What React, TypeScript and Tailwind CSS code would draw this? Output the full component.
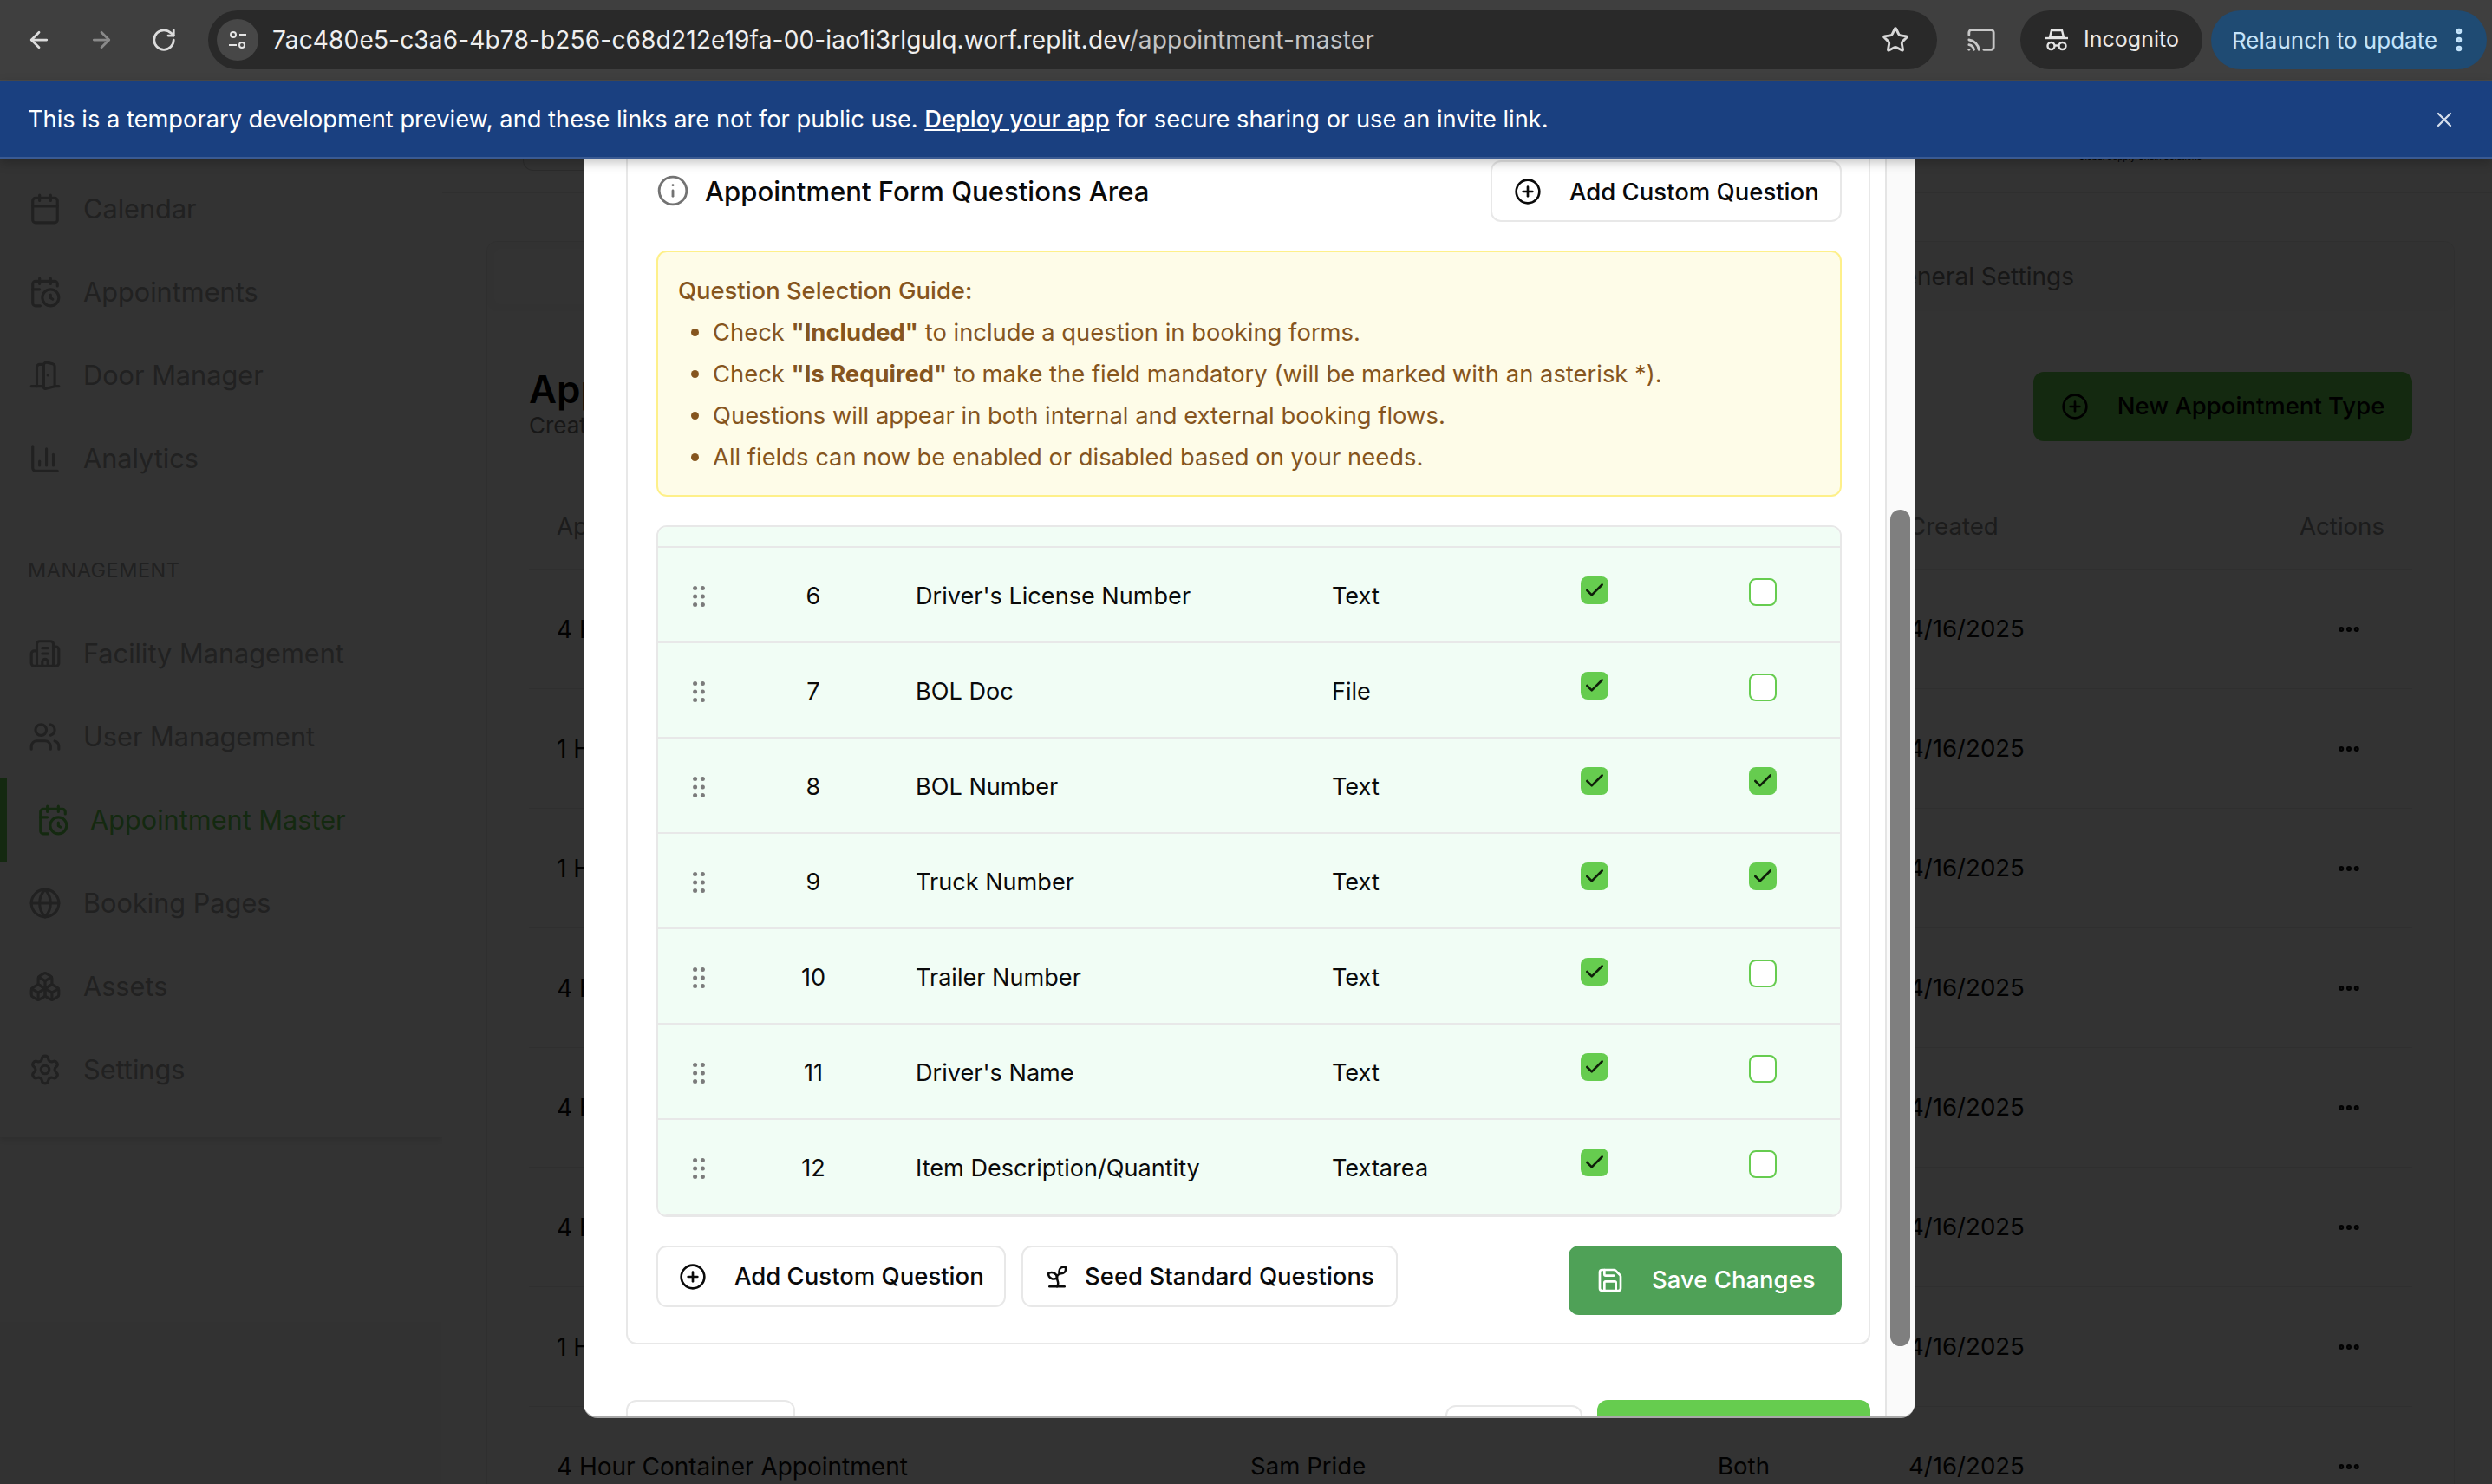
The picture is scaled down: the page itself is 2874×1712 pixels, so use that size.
import React from "react";
import {
  ArrowLeft, ArrowRight, RotateCw, Star, Cast, EllipsisVertical, X, Info, CirclePlus, Sprout, Save,
  Check, Calendar, CalendarClock, DoorOpen, ChartColumn, Building2, Users, Globe, Boxes, Settings, Ellipsis,
} from "lucide-react";

function SiteIcon() {
  return (
    <svg width="26" height="26" viewBox="0 0 26 26" fill="none" stroke="#e4e4e4" strokeWidth="2">
      <circle cx="8" cy="7" r="3" />
      <path d="M15 7h8" />
      <circle cx="18" cy="19" r="3" />
      <path d="M3 19h9" />
    </svg>
  );
}

function IncognitoIcon() {
  return (
    <svg width="30" height="30" viewBox="0 0 30 30" fill="none" stroke="#e4e4e4" strokeWidth="2.4">
      <path d="M9 4h12l2 8H7z" fill="none" />
      <path d="M2 13h26" />
      <circle cx="8.5" cy="22" r="4" />
      <circle cx="21.5" cy="22" r="4" />
      <path d="M12.5 21.5h5" />
    </svg>
  );
}

function GripDots() {
  return (
    <svg width="14" height="24" viewBox="0 0 14 24" fill="#7b7b7b" className="mt-[4px]">
      <circle cx="2.6" cy="2.6" r="2.5" /><circle cx="11.4" cy="2.6" r="2.5" />
      <circle cx="2.6" cy="12" r="2.5" /><circle cx="11.4" cy="12" r="2.5" />
      <circle cx="2.6" cy="21.4" r="2.5" /><circle cx="11.4" cy="21.4" r="2.5" />
    </svg>
  );
}

function ChromeBar() {
  return (
    <div className="flex h-[94px] items-center border-b-2 border-[#4a4a4a] bg-[#3f3f3f] text-[26px] text-[#e8e8e8]">
      <div className="flex w-[240px] shrink-0 items-center pl-[30px] text-[#dcdcdc]">
        <ArrowLeft size={30} strokeWidth={2.2} />
        <ArrowRight size={30} strokeWidth={2.2} className="ml-[42px] text-[#8a8a8a]" />
        <RotateCw size={30} strokeWidth={2.2} className="ml-[42px]" />
      </div>
      <div className="flex h-[68px] w-[1994px] shrink-0 items-center rounded-full bg-[#292929] pl-[10px] pr-[32px]">
        <div className="flex h-[48px] w-[48px] items-center justify-center rounded-full bg-[#474747]">
          <SiteIcon />
        </div>
        <div className="ml-[16px] flex-1 text-[28.1px] tracking-[0.12px]">
          <span className="text-[#efefef]">7ac480e5-c3a6-4b78-b256-c68d212e19fa-00-iao1i3rlgulq.worf.replit.dev</span>
          <span className="text-[#c4c4c4]">/appointment-master</span>
        </div>
        <Star size={32} strokeWidth={2.2} className="text-[#d8d8d8]" />
      </div>
      <Cast size={34} strokeWidth={2} className="ml-[34px] text-[#c8c8c8]" />
      <div className="ml-[28px] flex h-[68px] w-[210px] items-center justify-center gap-[16px] rounded-full bg-[#292929] text-[25px]">
        <IncognitoIcon />
        <span>Incognito</span>
      </div>
      <div className="ml-[10px] flex h-[68px] w-[318px] items-center rounded-full bg-[#1f4b73] pl-[24px] text-[26px] text-[#c4e4fb]">
        <span>Relaunch to update</span>
        <EllipsisVertical size={34} strokeWidth={2.6} className="ml-[8px]" />
      </div>
    </div>
  );
}

function Banner() {
  return (
    <div className="relative z-20 flex h-[89px] items-center border-b-2 border-[#3a5a92] bg-[#1a4080] pl-[32px] pr-[41px] text-[27.25px] text-white shadow-[0_4px_12px_rgba(0,0,0,0.25)]">
      <span className="pt-[2px]">
        This is a temporary development preview, and these links are not for public use.{" "}
        <span className="font-medium underline">Deploy your app</span> for secure sharing or use an invite link.
      </span>
      <X size={28} strokeWidth={2} className="ml-auto text-[#d5deec]" />
    </div>
  );
}

const navTop = [
  { label: "Calendar", Icon: Calendar },
  { label: "Appointments", Icon: CalendarClock },
  { label: "Door Manager", Icon: DoorOpen },
  { label: "Analytics", Icon: ChartColumn },
];
const navBottom = [
  { label: "Facility Management", Icon: Building2 },
  { label: "User Management", Icon: Users },
  { label: "Appointment Master", Icon: CalendarClock, active: true },
  { label: "Booking Pages", Icon: Globe },
  { label: "Assets", Icon: Boxes },
  { label: "Settings", Icon: Settings },
];

function NavRow({ label, Icon, active }: { label: string; Icon: any; active?: boolean }) {
  return active ? (
    <div className="flex h-[96px] items-center gap-[24px] border-l-[8px] border-[#66cc4f] pl-[34px] text-[#66cc4f]">
      <Icon size={38} strokeWidth={2} />
      <span className="text-[30.7px]">{label}</span>
    </div>
  ) : (
    <div className="flex h-[96px] items-center gap-[25px] pl-[33px] text-[#a3a3a3]">
      <Icon size={38} strokeWidth={2} />
      <span className="text-[30.7px]">{label}</span>
    </div>
  );
}

function Sidebar() {
  return (
    <div className="h-[1129px] w-[510px] shrink-0 bg-white pb-[32px] pt-[10px] shadow-[0_3px_6px_rgba(0,0,0,0.1)]">
      {navTop.map((n) => <NavRow key={n.label} {...n} />)}
      <div className="h-[129px] pl-[32px] pt-[65px] text-[23.5px] leading-[32px] tracking-[0.5px] text-[#a3a3a3]">MANAGEMENT</div>
      {navBottom.map((n) => <NavRow key={n.label} {...n} />)}
    </div>
  );
}

const bgRows = [
  "4 Hour Trailer Appointment",
  "1 Hour Trailer Appointment",
  "1 Hour Container Appointment",
  "4 Hour Trailer Appointment",
  "4 Hour Trailer Appointment",
  "4 Hour Trailer Appointment",
  "1 Hour Trailer Appointment",
  "4 Hour Container Appointment",
];

const bgCols = "grid grid-cols-[800px_539px_220px_1fr_120px] items-center pl-[32px] pr-[32px]";

function MainBackground() {
  return (
    <div className="min-w-0 flex-1 bg-[#fcfcfc]">
      <div className="flex h-[40px] items-start border-b border-[#ececec] pl-[93px]">
        <div className="h-[14px] w-[80px] rounded-b-xl border-x border-b border-[#d4d4d4]" />
        <div className="ml-auto mr-[335px] -mt-[9px] text-[10px] leading-[14px] text-black">Global Supply Chain Solutions</div>
      </div>
      <div className="ml-[51px] mr-[43px] mt-[55px] rounded-xl border border-[#ececec] pb-[40px]">
        <div className="flex h-[80px] items-center rounded-xl bg-[#f7f7f7] p-[8px]">
          <div className="h-[64px] w-[500px] rounded-lg bg-white" />
          <span className="ml-auto mr-[430px] text-[28px] text-[#737373]">General Settings</span>
        </div>
        <div className="px-[48px]">
          <div className="mt-[70px] flex h-[80px] items-center justify-between">
            <div className="-mt-[4px]">
              <div className="text-[44px] font-semibold leading-[44px] text-black">Appointment Types</div>
              <div className="mt-[4px] text-[26px] leading-[32px] text-[#737373]">Create and manage appointment types</div>
            </div>
            <div className="flex h-[80px] w-[437px] items-center justify-center gap-[33px] rounded-xl bg-[#66cc4f] text-[27.5px] font-medium text-black">
              <CirclePlus size={32} strokeWidth={2} />
              <span>New Appointment Type</span>
            </div>
          </div>
          <div className={`${bgCols} mt-[48px] h-[100px] border-b border-[#ececec] pt-[2px] text-[27.6px] text-[#8a8a8a]`}>
            <span>Appointment Type</span>
            <span>Created By</span>
            <span>Mode</span>
            <span>Created</span>
            <span className="justify-self-end">Actions</span>
          </div>
          {bgRows.map((r, i) => (
            <div key={i} className={`${bgCols} h-[138px] border-b border-[#ececec] text-[27.6px] text-[#0a0a0a]`}>
              <span className="text-[28px]">{r}</span>
              <span>Sam Pride</span>
              <span>Both</span>
              <span>4/16/2025</span>
              <Ellipsis size={30} strokeWidth={2.8} className="mr-[26px] justify-self-end" />
            </div>
          ))}
        </div>
      </div>
    </div>
  );
}

const qRows = [
  { n: 6, name: "Driver's License Number", type: "Text", req: false },
  { n: 7, name: "BOL Doc", type: "File", req: false },
  { n: 8, name: "BOL Number", type: "Text", req: true },
  { n: 9, name: "Truck Number", type: "Text", req: true },
  { n: 10, name: "Trailer Number", type: "Text", req: false },
  { n: 11, name: "Driver's Name", type: "Text", req: false },
  { n: 12, name: "Item Description/Quantity", type: "Textarea", req: false },
];

function Box({ on, className }: { on: boolean; className?: string }) {
  return on ? (
    <div className={`flex h-[32px] w-[32px] items-center justify-center rounded-[8px] bg-[#66cc4f] text-[#0f1f0a] ${className ?? ""}`}>
      <Check size={26} strokeWidth={2.4} />
    </div>
  ) : (
    <div className={`h-[32px] w-[32px] rounded-[8px] border-2 border-[#66cc4f] bg-white ${className ?? ""}`} />
  );
}

function QuestionRow({ n, name, type, req }: { n: number; name: string; type: string; req: boolean }) {
  return (
    <div className="grid h-[110px] grid-cols-[79px_120px_538px_287px_194px_1fr] items-center border-b-2 border-[#e8e8e8] bg-[#f1fdf5] pl-[40px] text-[27.1px] text-[#0a0a0a]">
      <GripDots />
      <span className="pt-[4px] text-center">{n}</span>
      <span className="whitespace-nowrap pl-[58px] pt-[4px]">{name}</span>
      <span className="pt-[4px]">{type}</span>
      <Box on className="-mt-[10px]" />
      <Box on={req} className={req ? "-mt-[10px]" : "-mt-[6px]"} />
    </div>
  );
}

function OutlineBtn({ className, children }: { className?: string; children: React.ReactNode }) {
  return (
    <div className={`flex h-[71px] items-center rounded-xl border-2 border-[#e8e8e8] bg-white text-[27.5px] font-medium text-[#0a0a0a] ${className ?? ""}`}>
      {children}
    </div>
  );
}

function Modal() {
  return (
    <div className="absolute left-[673px] top-0 z-10 flex h-[1453px] w-[1535px] overflow-hidden rounded-b-2xl border-b-2 border-[#a8a8a8] bg-white">
      <div className="h-full min-w-0 flex-1 pl-[49px] pr-[17px]">
        <div className="rounded-b-xl border-x-2 border-b-2 border-[#e8e8e8] pb-[32px] pl-[33px] pr-[31px] pt-[2px]">
          <div className="flex h-[71px] items-center justify-between">
            <div className="flex items-center gap-[18px]">
              <Info size={38} strokeWidth={1.8} className="text-[#737373]" />
              <span className="pt-[2px] text-[31.1px] font-medium text-[#0a0a0a]">Appointment Form Questions Area</span>
            </div>
            <OutlineBtn className="w-[405px] pl-[25px]">
              <CirclePlus size={32} strokeWidth={2} />
              <span className="ml-[32px] pt-[2px]">Add Custom Question</span>
            </OutlineBtn>
          </div>
          <div className="mt-[33px] h-[284px] rounded-xl border-2 border-[#fef08a] bg-[#fefce8] pl-[23px] pt-[20px] text-[27.4px] leading-[48px] text-[#85551e]">
            <div className="font-medium">Question Selection Guide:</div>
            <ul className="list-disc pl-[40px]">
              <li>Check <b>"Included"</b> to include a question in booking forms.</li>
              <li>Check <b>"Is Required"</b> to make the field mandatory (will be marked with an asterisk *).</li>
              <li>Questions will appear in both internal and external booking flows.</li>
              <li>All fields can now be enabled or disabled based on your needs.</li>
            </ul>
          </div>
          <div className="mt-[33px] overflow-hidden rounded-xl border-2 border-[#e8e8e8]">
            <div className="h-[24px] border-b-2 border-[#e8e8e8] bg-[#f1fdf5]" />
            {qRows.map((r) => <QuestionRow key={r.n} {...r} />)}
          </div>
          <div className="mt-[33px] flex items-start">
            <OutlineBtn className="w-[403px] pl-[24px]">
              <CirclePlus size={32} strokeWidth={2} />
              <span className="ml-[32px]">Add Custom Question</span>
            </OutlineBtn>
            <OutlineBtn className="ml-[18px] w-[434px] pl-[24px]">
              <Sprout size={30} strokeWidth={2} />
              <span className="ml-[17px]">Seed Standard Questions</span>
            </OutlineBtn>
            <div className="ml-auto flex h-[80px] w-[315px] items-center rounded-xl bg-[#4fa157] pl-[32px] text-[27.5px] font-medium text-white">
              <Save size={32} strokeWidth={2} />
              <span className="ml-[32px]">Save Changes</span>
            </div>
          </div>
        </div>
        <div className="mt-[64px] flex items-start">
          <div className="h-[80px] w-[195px] rounded-xl border-2 border-[#e8e8e8] bg-white" />
          <div className="ml-auto mt-[6px] h-[74px] w-[158px] rounded-xl border-2 border-[#e8e8e8] bg-white" />
          <div className="ml-[17px] h-[80px] w-[315px] rounded-xl bg-[#66cc4f]" />
        </div>
      </div>
      <div className="h-full w-[34px] shrink-0 border-l-2 border-[#e5e5e5] bg-[#fafafa] pl-[4px] pt-[405px]">
        <div className="h-[965px] w-[23px] rounded-full bg-[#7f7f7f]" />
      </div>
    </div>
  );
}

export default function App() {
  return (
    <div className="flex h-[1712px] w-[2874px] flex-col overflow-hidden bg-[#333333] font-['Inter','Liberation_Sans',sans-serif]">
      <ChromeBar />
      <Banner />
      <div className="relative min-h-0 flex-1 overflow-hidden">
        <div className="flex h-full items-start bg-[#fcfcfc]">
          <Sidebar />
          <MainBackground />
        </div>
        <div className="absolute inset-0 bg-black/80" />
        <Modal />
      </div>
    </div>
  );
}
